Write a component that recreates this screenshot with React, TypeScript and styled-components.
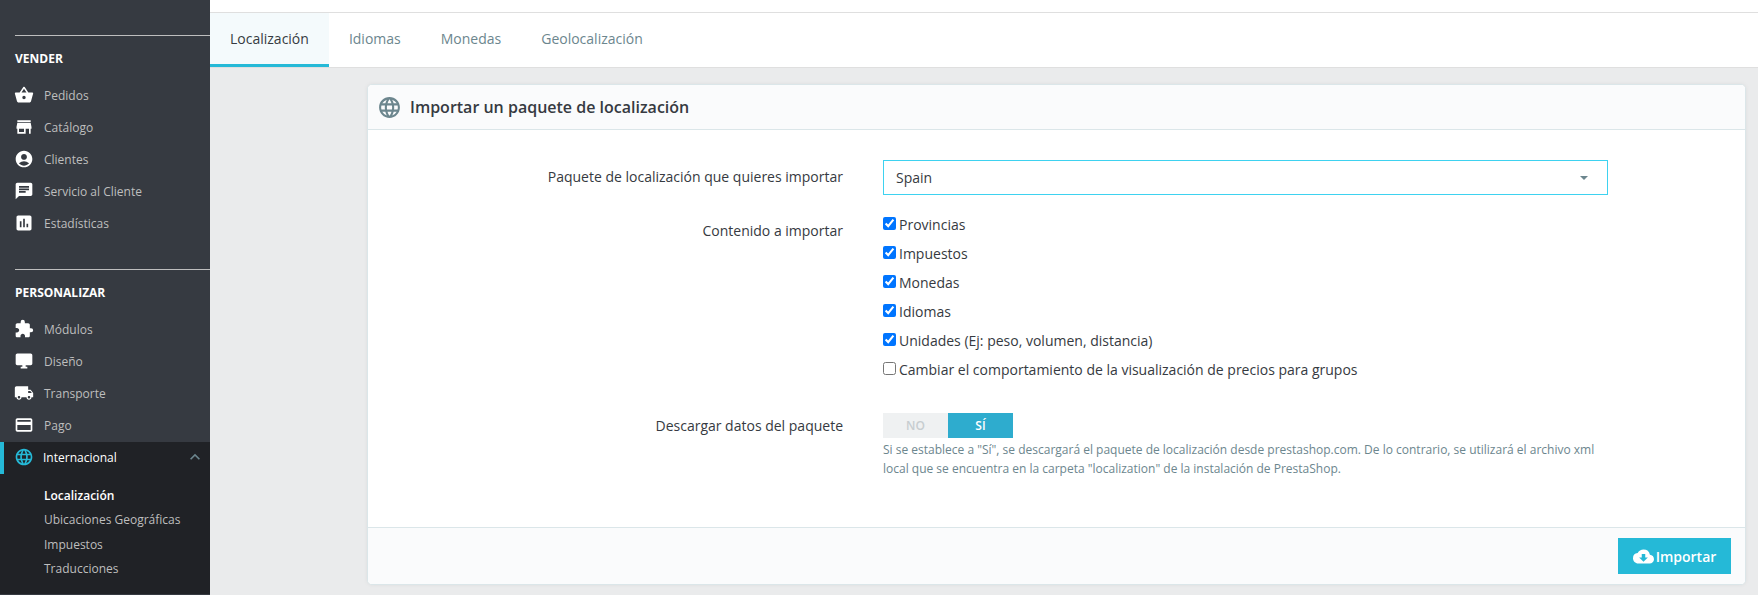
import styled, { createGlobalStyle } from "styled-components";
import {
  MdShoppingBasket,
  MdStore,
  MdAccountCircle,
  MdChat,
  MdAssessment,
  MdExtension,
  MdDesktopWindows,
  MdLocalShipping,
  MdPayment,
  MdLanguage,
  MdKeyboardArrowUp,
  MdCloudDownload,
} from "react-icons/md";

const GlobalStyle = createGlobalStyle`
  html, body {
    margin: 0;
    padding: 0;
    height: 595px;
    overflow: hidden;
    background: #eaebec;
    font-family: "Open Sans", sans-serif;
  }
  * {
    box-sizing: border-box;
  }
`;

const Page = styled.div`
  display: flex;
  width: 1758px;
  height: 595px;
  overflow: hidden;
`;

const Sidebar = styled.nav`
  flex: 0 0 210px;
  height: 595px;
  overflow: hidden;
  background: #363a41;
  padding-top: 35px;
`;

const Section = styled.div`
  margin-left: 15px;
  border-top: 1px solid #bebebe;
  height: 16px;
`;

const SectionTitle = styled.div`
  color: #fff;
  font-size: 12px;
  font-weight: 700;
  line-height: 16px;
  padding-left: 15px;
  height: 16px;
  margin-bottom: 13px;
`;

const MenuItem = styled.div<{ $active?: boolean }>`
  display: flex;
  align-items: center;
  height: 32px;
  padding-bottom: 2px;
  padding-left: ${(p) => (p.$active ? "11px" : "15px")};
  border-left: ${(p) => (p.$active ? "4px solid #25b9d7" : "none")};
  background: ${(p) => (p.$active ? "#202226" : "transparent")};
  color: ${(p) => (p.$active ? "#fff" : "#bebebe")};
  font-size: 12px;
  position: relative;

  svg.main {
    flex: 0 0 20px;
    font-size: 20px;
    margin-left: -1px;
    margin-right: ${(p) => (p.$active ? "9px" : "10px")};
    color: ${(p) => (p.$active ? "#25b9d7" : "#fff")};
  }
`;

const Chevron = styled(MdKeyboardArrowUp)`
  position: absolute;
  right: 5px;
  top: 5px;
  font-size: 20px;
  color: #6c868e;
`;

const SubMenu = styled.div`
  background: #202226;
  height: 120px;
  padding: 10px 0 0 44px;
`;

const SubItem = styled.div<{ $current?: boolean }>`
  height: 24.3px;
  line-height: 24px;
  font-size: 12px;
  color: ${(p) => (p.$current ? "#fff" : "#bebebe")};
  font-weight: ${(p) => (p.$current ? 600 : 400)};
`;

const Gap = styled.div`
  height: 29px;
`;

const Main = styled.main`
  flex: 1;
  display: flex;
  flex-direction: column;
  min-width: 0;
`;

const TopBar = styled.div`
  height: 13px;
  background: #fff;
  border-bottom: 1px solid #dfdfdf;
`;

const Tabs = styled.div`
  display: flex;
  height: 55px;
  background: #fff;
  border-bottom: 1px solid #dfdfdf;
`;

const Tab = styled.div<{ $active?: boolean }>`
  height: 54px;
  padding: 0 20px;
  display: flex;
  align-items: center;
  font-size: 14px;
  color: ${(p) => (p.$active ? "#363a41" : "#6c868e")};
  background: ${(p) => (p.$active ? "#f4fafc" : "#fff")};
  border-bottom: 3px solid ${(p) => (p.$active ? "#25b9d7" : "transparent")};
`;

const Content = styled.div`
  padding: 16px 12px 0 157px;
`;

const Card = styled.section`
  background: #fff;
  height: 501px;
  border-radius: 5px;
  border: 1px solid #dbe6e9;
  box-shadow: 0 0 4px 0 rgba(0, 0, 0, 0.06);
  overflow: hidden;
  display: flex;
  flex-direction: column;
`;

const CardHeader = styled.header`
  height: 45px;
  flex: none;
  background: #fafbfc;
  border-bottom: 1px solid #dbe6e9;
  display: flex;
  align-items: center;
  padding-left: 9px;
  gap: 8px;
  color: #363a41;
  font-size: 16px;
  font-weight: 600;

  svg {
    font-size: 25px;
    color: #6c868e;
  }
`;

const CardBody = styled.div`
  flex: 1;
  padding-top: 30px;
`;

const Row = styled.div`
  display: grid;
  grid-template-columns: 475px 725px;
  column-gap: 40px;
`;

const Label = styled.label<{ $top: number }>`
  text-align: right;
  font-size: 14px;
  line-height: 20px;
  color: #363a41;
  padding-top: ${(p) => p.$top}px;
`;

const SelectBox = styled.div`
  height: 35px;
  border: 1px solid #3ed2f0;
  padding: 0 12px;
  display: flex;
  align-items: center;
  justify-content: space-between;
  font-size: 14px;
  color: #363a41;
`;

const Caret = styled.span`
  width: 0;
  height: 0;
  margin-right: 7px;
  border-left: 4px solid transparent;
  border-right: 4px solid transparent;
  border-top: 4px solid #6c868e;
`;

const ContentRow = styled(Row)`
  margin-top: 15px;
`;

const SwitchRow = styled(Row)`
  margin-top: 29px;
`;

const CheckList = styled.div`
  display: flex;
  flex-direction: column;
`;

const CheckRow = styled.label`
  display: flex;
  align-items: center;
  height: 29px;
  font-size: 14px;
  color: #363a41;

  input {
    width: 13px;
    height: 13px;
    margin: 0 3px 2px 0;
  }
`;

const Switch = styled.div`
  display: flex;
  width: 130px;
  height: 25px;
`;

const SwitchOption = styled.div<{ $on?: boolean }>`
  flex: 0 0 65px;
  display: flex;
  align-items: center;
  justify-content: center;
  font-size: 12px;
  font-weight: 600;
  color: ${(p) => (p.$on ? "#fff" : "#c7cdd0")};
  background: ${(p) => (p.$on ? "#2eacce" : "#eff1f2")};
`;

const Help = styled.p`
  margin: 2px 0 0;
  font-size: 12px;
  line-height: 19px;
  color: #6c868e;
`;

const CardFooter = styled.footer`
  height: 57px;
  flex: none;
  background: #fafbfc;
  border-top: 1px solid #dbe6e9;
  display: flex;
  justify-content: flex-end;
  align-items: flex-start;
  padding: 10px 14px 0 0;
`;

const ImportButton = styled.button`
  width: 113px;
  height: 36px;
  border: none;
  background: #25b9d7;
  color: #fff;
  font-family: inherit;
  font-size: 14px;
  font-weight: 600;
  display: flex;
  align-items: center;
  justify-content: center;
  gap: 2px;
  padding: 0;

  svg {
    font-size: 21px;
  }
`;

const sell = [
  { label: "Pedidos", icon: MdShoppingBasket },
  { label: "Catálogo", icon: MdStore },
  { label: "Clientes", icon: MdAccountCircle },
  { label: "Servicio al Cliente", icon: MdChat },
  { label: "Estadísticas", icon: MdAssessment },
];

const customize = [
  { label: "Módulos", icon: MdExtension },
  { label: "Diseño", icon: MdDesktopWindows },
  { label: "Transporte", icon: MdLocalShipping },
  { label: "Pago", icon: MdPayment },
];

const imports = [
  { label: "Provincias", checked: true },
  { label: "Impuestos", checked: true },
  { label: "Monedas", checked: true },
  { label: "Idiomas", checked: true },
  { label: "Unidades (Ej: peso, volumen, distancia)", checked: true },
  { label: "Cambiar el comportamiento de la visualización de precios para grupos", checked: false },
];

export default function App() {
  return (
    <Page>
      <GlobalStyle />
      <Sidebar>
        <Section />
        <SectionTitle>VENDER</SectionTitle>
        {sell.map((item) => (
          <MenuItem key={item.label}>
            <item.icon className="main" />
            {item.label}
          </MenuItem>
        ))}
        <Gap />
        <Section />
        <SectionTitle>PERSONALIZAR</SectionTitle>
        {customize.map((item) => (
          <MenuItem key={item.label}>
            <item.icon className="main" />
            {item.label}
          </MenuItem>
        ))}
        <MenuItem $active>
          <MdLanguage className="main" />
          Internacional
          <Chevron />
        </MenuItem>
        <SubMenu>
          <SubItem $current>Localización</SubItem>
          <SubItem>Ubicaciones Geográficas</SubItem>
          <SubItem>Impuestos</SubItem>
          <SubItem>Traducciones</SubItem>
        </SubMenu>
      </Sidebar>
      <Main>
        <TopBar />
        <Tabs>
          <Tab $active>Localización</Tab>
          <Tab>Idiomas</Tab>
          <Tab>Monedas</Tab>
          <Tab>Geolocalización</Tab>
        </Tabs>
        <Content>
          <Card>
            <CardHeader>
              <MdLanguage />
              Importar un paquete de localización
            </CardHeader>
            <CardBody>
              <Row>
                <Label $top={7}>Paquete de localización que quieres importar</Label>
                <SelectBox>
                  Spain
                  <Caret />
                </SelectBox>
              </Row>
              <ContentRow>
                <Label $top={11}>Contenido a importar</Label>
                <CheckList>
                  {imports.map((item) => (
                    <CheckRow key={item.label}>
                      <input type="checkbox" defaultChecked={item.checked} />
                      {item.label}
                    </CheckRow>
                  ))}
                </CheckList>
              </ContentRow>
              <SwitchRow>
                <Label $top={3}>Descargar datos del paquete</Label>
                <div>
                  <Switch>
                    <SwitchOption>NO</SwitchOption>
                    <SwitchOption $on>SÍ</SwitchOption>
                  </Switch>
                  <Help>
                    Si se establece a "Sí", se descargará el paquete de localización desde prestashop.com. De lo
                    contrario, se utilizará el archivo xml local que se encuentra en la carpeta "localization" de la
                    instalación de PrestaShop.
                  </Help>
                </div>
              </SwitchRow>
            </CardBody>
            <CardFooter>
              <ImportButton>
                <MdCloudDownload />
                Importar
              </ImportButton>
            </CardFooter>
          </Card>
        </Content>
      </Main>
    </Page>
  );
}
